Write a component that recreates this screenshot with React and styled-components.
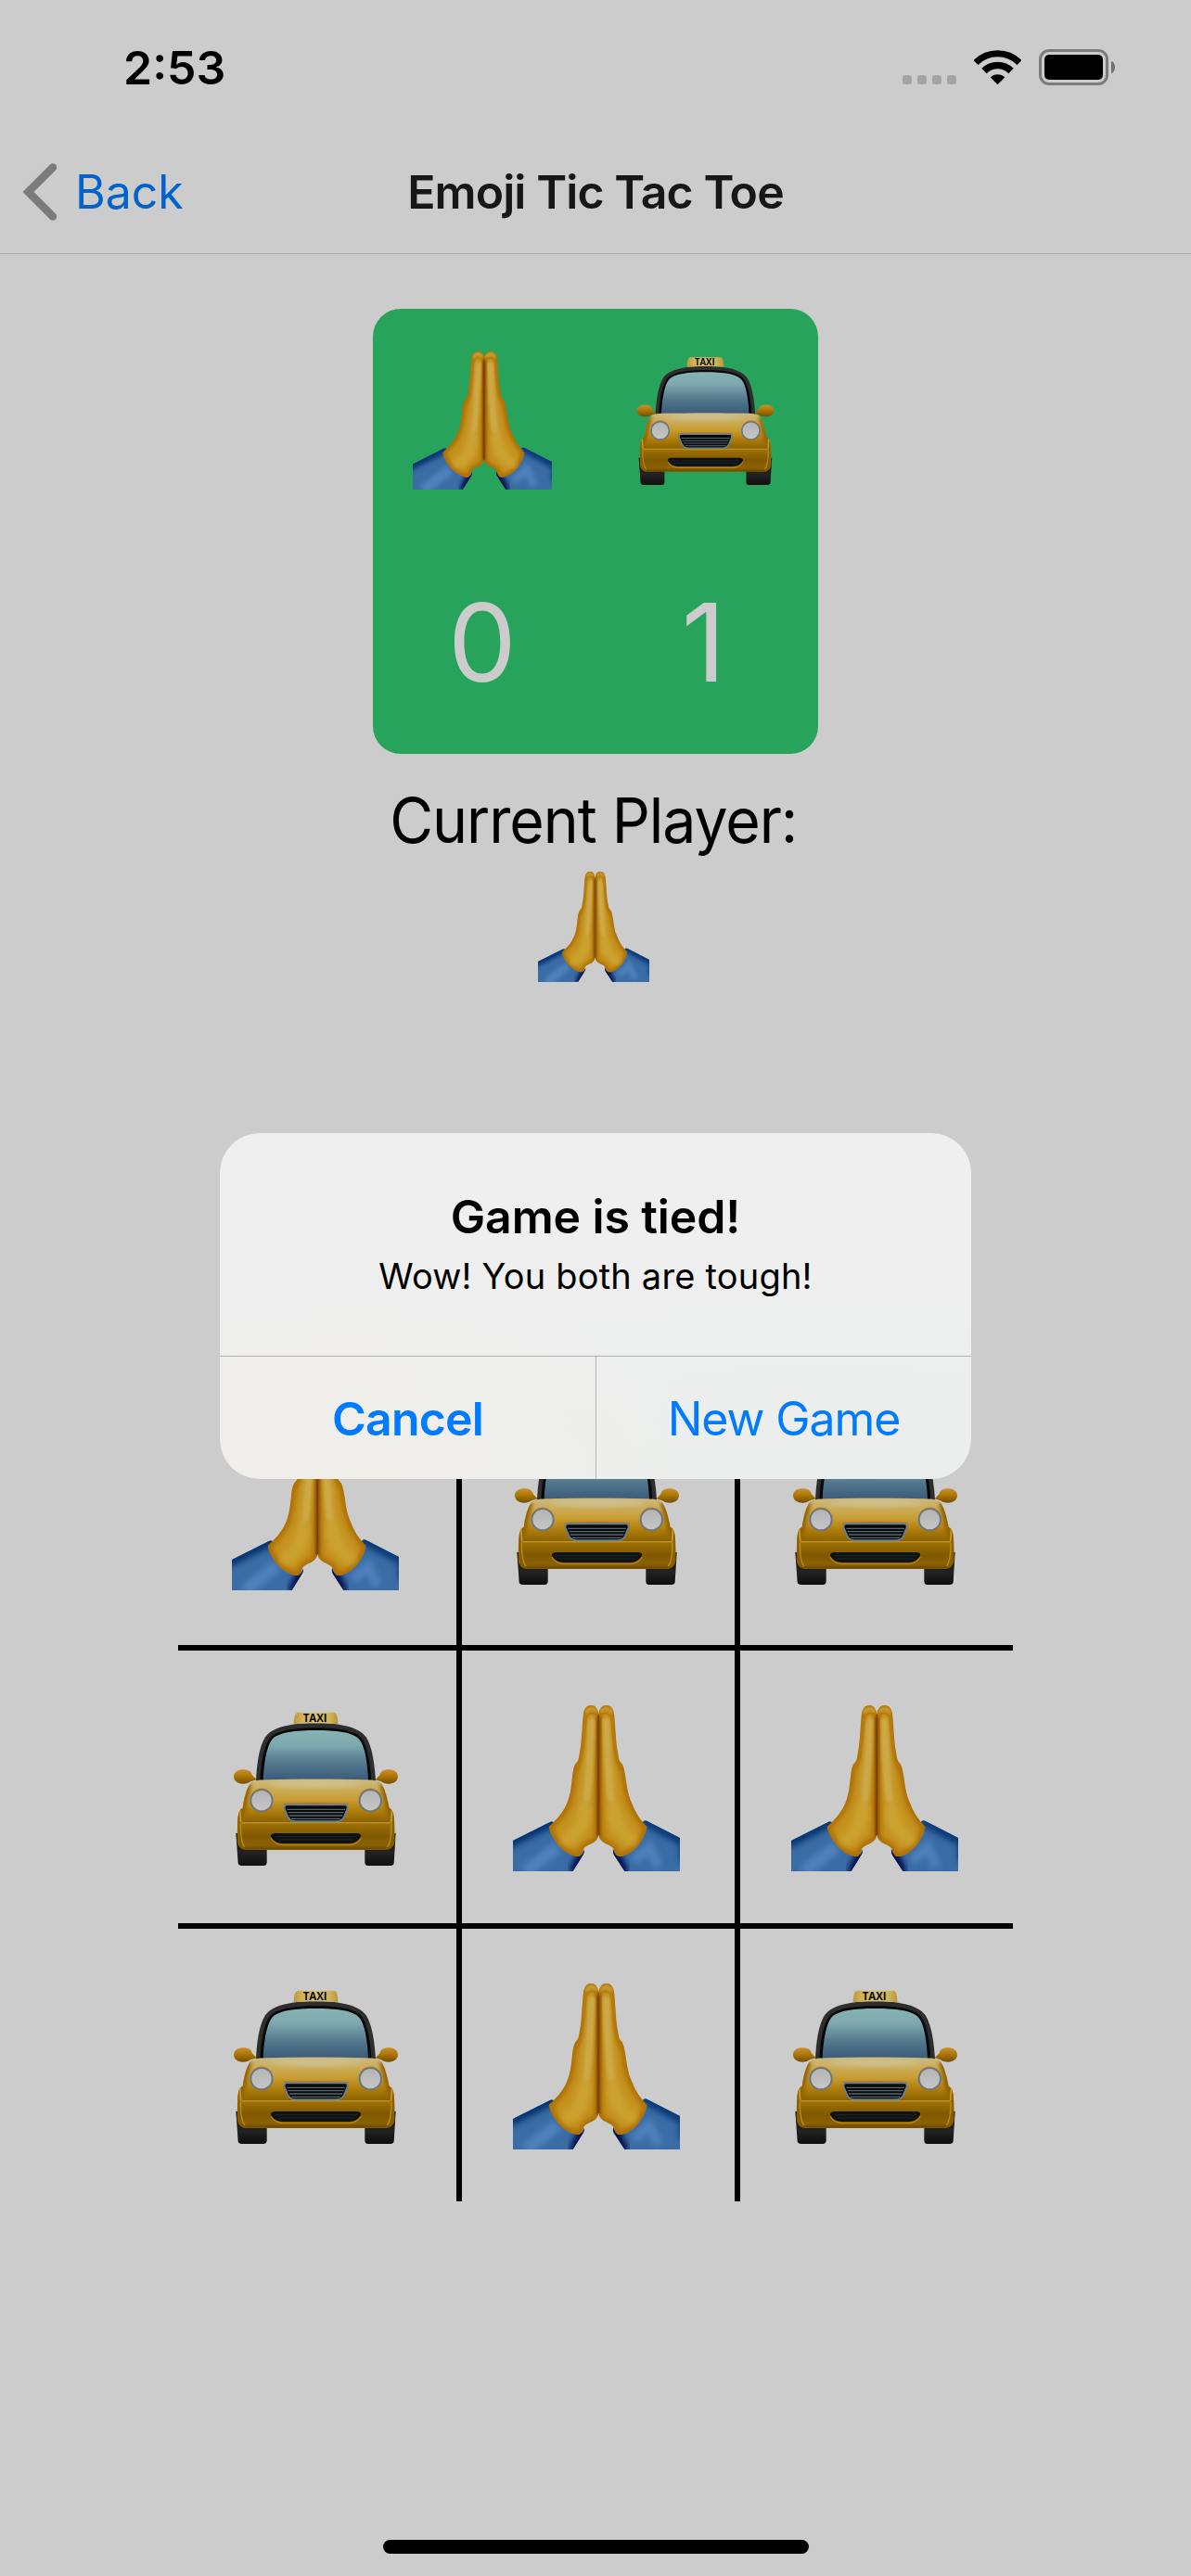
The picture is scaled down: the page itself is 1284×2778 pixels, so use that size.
import React from 'react';
import styled, { createGlobalStyle } from 'styled-components';

const GlobalStyle = createGlobalStyle`
  * { box-sizing: border-box; }
  body {
    margin: 0;
    background: #cccccc;
    font-family: Inter, Roboto, 'Liberation Sans', sans-serif;
  }
`;

const Screen = styled.div`
  display: flex;
  flex-direction: column;
  width: 1284px;
  height: 2778px;
  background: #cccccc;
`;

/* ---------- status bar ---------- */

const StatusBar = styled.header`
  display: flex;
  align-items: center;
  justify-content: space-between;
  height: 145px;
  padding: 0 82px 0 133px;
`;

const Clock = styled.span`
  font-size: 50px;
  font-weight: 600;
  line-height: 60px;
  color: #000;
`;

const StatusIcons = styled.div`
  display: flex;
  align-items: center;
  gap: 19px;
`;

const Signal = styled.div`
  display: flex;
  align-items: flex-end;
  gap: 6px;
  height: 37px;
`;

const SignalDot = styled.i`
  width: 10px;
  height: 10px;
  border-radius: 3px;
  background: #a3a3a3;
`;

const BatteryBox = styled.div`
  display: flex;
  align-items: center;
  gap: 3px;
`;

const BatteryShell = styled.div`
  width: 75px;
  height: 39px;
  padding: 3px;
  border: 3px solid #7b7b7b;
  border-radius: 11px;
`;

const BatteryLevel = styled.div`
  height: 100%;
  border-radius: 5px;
  background: #000;
`;

const BatteryTip = styled.i`
  width: 4px;
  height: 13px;
  border-radius: 0 4px 4px 0 / 0 6.5px 6.5px 0;
  background: #707070;
`;

/* ---------- navigation bar ---------- */

const NavBar = styled.nav`
  display: grid;
  grid-template-columns: 1fr auto 1fr;
  align-items: center;
  height: 129px;
  padding: 0 25px 4px;
  border-bottom: 1px solid #b0b0b0;
`;

const BackButton = styled.button`
  display: flex;
  align-items: center;
  gap: 20px;
  padding: 0;
  border: 0;
  background: none;
  font: inherit;
  font-size: 50px;
  line-height: 60px;
  color: #0062cc;
`;

const NavTitle = styled.h1`
  margin: 0;
  padding-bottom: 1px;
  font-size: 50px;
  font-weight: 600;
  line-height: 60px;
  letter-spacing: -0.92px;
  color: #171718;
`;

/* ---------- game ---------- */

const Main = styled.main`
  display: flex;
  flex-direction: column;
  align-items: center;
  padding-top: 59px;
`;

const ScoreCard = styled.section`
  display: grid;
  grid-template-columns: 240px 240px;
  grid-template-rows: 150px 140px;
  row-gap: 95px;
  justify-items: center;
  width: 480px;
  height: 480px;
  padding-top: 45px;
  border-radius: 30px;
  background: #27a35b;
`;

const ScoreCell = styled.div`
  padding-right: ${(p) => p.$shift || 4}px;
  font-size: 117px;
  line-height: 140px;
  color: #cccccc;
`;

const Turn = styled.section`
  display: flex;
  flex-direction: column;
  align-items: center;
  gap: 14px;
  margin-top: 32px;
  padding-right: 4px;
`;

const TurnLabel = styled.p`
  margin: 0;
  font-size: 67px;
  line-height: 80px;
  letter-spacing: -1.1px;
  transform: scaleX(0.96);
  color: #000;
`;

const Board = styled.section`
  display: grid;
  grid-template-columns: repeat(3, 300px);
  grid-template-rows: repeat(3, 300px);
  margin-top: 415px;
`;

const Square = styled.div`
  display: flex;
  align-items: center;
  justify-content: center;
  padding: 2px 4px 0 0;
  border: 0 solid #000;
  border-left-width: ${(p) => (p.$col > 0 ? 6 : 0)}px;
  border-top-width: ${(p) => (p.$row > 0 ? 6 : 0)}px;
`;

const EmojiSvg = styled.svg`
  display: block;
  width: ${(p) => p.$size}px;
  height: ${(p) => p.$size}px;
`;

const HomeIndicator = styled.div`
  width: 459px;
  height: 15px;
  margin: auto auto 24px;
  border-radius: 8px;
  background: #000;
`;

/* ---------- alert ---------- */

const Overlay = styled.div`
  position: absolute;
  top: 0;
  left: 0;
  display: flex;
  justify-content: center;
  align-items: center;
  width: 1284px;
  height: 2778px;
  padding-top: 39px;
`;

const Alert = styled.div`
  width: 810px;
  height: 373px;
  border-radius: 43px;
  overflow: hidden;
  background:
    radial-gradient(ellipse 420px 200px at 18% 100%, #f0eee9 0%, rgba(240, 238, 233, 0) 100%),
    radial-gradient(ellipse 620px 230px at 80% 100%, #eaeeed 0%, rgba(234, 238, 237, 0) 100%),
    #efefef;
`;

const AlertBody = styled.div`
  height: 240px;
  padding-top: 60px;
  text-align: center;
`;

const AlertTitle = styled.h2`
  margin: 0;
  font-size: 50px;
  font-weight: 600;
  line-height: 60px;
  letter-spacing: -0.12px;
  color: #000;
`;

const AlertMessage = styled.p`
  margin: 9px 0 0;
  font-size: 38px;
  line-height: 50px;
  letter-spacing: 0.2px;
  color: #000;
`;

const AlertActions = styled.div`
  display: grid;
  grid-template-columns: 405px 405px;
  height: 133px;
  border-top: 1px solid #b0b0b0;
`;

const AlertButton = styled.button`
  padding: 1px 0 0;
  border: 0;
  border-left: ${(p) => (p.$divided ? '1px solid #b3b3b3' : '0')};
  background: none;
  font: inherit;
  font-size: 50px;
  font-weight: ${(p) => (p.$strong ? 600 : 400)};
  letter-spacing: ${(p) => (p.$strong ? '-0.8px' : '-1.1px')};
  color: #007aff;
`;

/* ---------- drawings ---------- */

const HAND_L =
  'M316 84 C313 67 304 57 292 57 C279 57 269 67 267 84 C262 125 262 180 254 214 C252 230 250 239 244 243 C237 251 234 262 231 288 C227 322 225 345 216 368 C206 395 188 420 155 450 C163 492 203 541 248 547 C259 547 265 535 268 521 C275 509 296 507 307 495 C314 487 316 481 316 470 Z';
const HAND_R =
  'M316 84 C319 67 328 57 341 57 C354 57 364 67 366 84 C371 125 371 180 379 214 C381 230 383 239 389 243 C396 251 399 262 403 288 C408 322 411 345 421 368 C432 395 443 420 473 450 C466 492 430 541 386 547 C374 547 367 535 364 521 C357 509 336 507 325 495 C318 487 316 481 316 470 Z';

function PrayEmoji({ size }) {
  return (
    <EmojiSvg $size={size} viewBox="39 54 540 540" role="img" aria-label="folded hands">
      <defs>
        <filter id="prayBlur" x="-50%" y="-50%" width="200%" height="200%" colorInterpolationFilters="sRGB">
          <feGaussianBlur stdDeviation="9" />
        </filter>
        <filter id="praySoft" filterUnits="userSpaceOnUse" x="39" y="30" width="540" height="580" colorInterpolationFilters="sRGB">
          <feGaussianBlur stdDeviation="4" />
        </filter>
        <clipPath id="prayL"><path d={HAND_L} /></clipPath>
        <clipPath id="prayR"><path d={HAND_R} /></clipPath>
        <clipPath id="sleeveL">
          <path d="M39 495 L160 434 Q168 431 172 438 L262 540 L270 524 Q270 534 266 541 L233 594 H39 Z" />
        </clipPath>
        <clipPath id="sleeveR">
          <path d="M579 486 L472 431 Q464 427 458 436 L372 540 L363 522 Q361 534 367 543 L400 594 H579 Z" />
        </clipPath>
      </defs>

      <g clipPath="url(#sleeveL)">
        <rect x="39" y="420" width="240" height="174" fill="#3a6ca6" />
        <path d="M20 500 L170 425 L175 450" stroke="#063470" strokeWidth="46" fill="none" filter="url(#prayBlur)" />
        <path d="M278 515 L238 602" stroke="#000e4a" strokeWidth="40" fill="none" filter="url(#prayBlur)" />
        <path d="M80 595 L185 515" stroke="#4f82bc" strokeWidth="40" fill="none" filter="url(#prayBlur)" />
      </g>
      <g clipPath="url(#sleeveR)">
        <rect x="360" y="420" width="219" height="174" fill="#3a6ca6" />
        <path d="M460 420 L600 495 V560" stroke="#0b3a76" strokeWidth="46" fill="none" filter="url(#prayBlur)" />
        <path d="M356 515 L396 602" stroke="#000e4a" strokeWidth="40" fill="none" filter="url(#prayBlur)" />
        <path d="M430 560 L480 515 L510 580" stroke="#4f82bc" strokeWidth="30" fill="none" filter="url(#prayBlur)" />
      </g>

      <g clipPath="url(#prayL)">
        <path d={HAND_L} fill="#c6931f" />
        <path d={HAND_L} fill="none" stroke="#a86900" strokeWidth="24" filter="url(#prayBlur)" />
        <path d="M292 105 C286 200 284 300 272 380 C268 410 264 430 262 452" fill="none" stroke="#cba541" strokeWidth="24" strokeLinecap="round" filter="url(#prayBlur)" />
        <path d="M270 400 C262 450 240 480 215 490" fill="none" stroke="#cba12f" strokeWidth="44" strokeLinecap="round" filter="url(#prayBlur)" />
        <path d="M294 110 C290 200 286 290 278 360" fill="none" stroke="#cda947" strokeWidth="18" strokeLinecap="round" filter="url(#praySoft)" />
        <path d="M274 82 Q292 54 310 80" fill="none" stroke="#c99e35" strokeWidth="12" filter="url(#praySoft)" />
        <path d="M312 92 C306 80 284 78 277 96 C271 140 270 190 262 225 C259 245 252 258 249 268" fill="none" stroke="#b57a08" strokeWidth="4" />
        <path d="M316 95 V480" fill="none" stroke="#6f3300" strokeWidth="9" filter="url(#praySoft)" />
      </g>
      <g clipPath="url(#prayR)">
        <path d={HAND_R} fill="#c6931f" />
        <path d={HAND_R} fill="none" stroke="#a86900" strokeWidth="24" filter="url(#prayBlur)" />
        <path d="M341 105 C345 200 348 300 362 380 C366 410 368 430 368 450" fill="none" stroke="#cba541" strokeWidth="24" strokeLinecap="round" filter="url(#prayBlur)" />
        <path d="M364 400 C378 450 396 480 420 490" fill="none" stroke="#cba12f" strokeWidth="44" strokeLinecap="round" filter="url(#prayBlur)" />
        <path d="M340 110 C343 200 346 290 356 360" fill="none" stroke="#cda947" strokeWidth="20" strokeLinecap="round" filter="url(#praySoft)" />
        <path d="M323 80 Q341 54 359 82" fill="none" stroke="#c99e35" strokeWidth="12" filter="url(#praySoft)" />
        <path d="M321 92 C327 80 349 78 356 96 C362 140 363 190 371 225 C374 245 382 258 386 268" fill="none" stroke="#b57a08" strokeWidth="4" />
        <path d="M317 95 V480" fill="none" stroke="#7a3d00" strokeWidth="7" filter="url(#praySoft)" />
      </g>
      <path d="M316 86 V478" fill="none" stroke="#6f3600" strokeWidth="3" />
    </EmojiSvg>
  );
}

const CAR_BODY =
  'M86 284 C94 271 112 269 140 268 C240 265 362 265 464 268 C490 269 508 271 516 284 C528 306 534 334 539 360 C553 364 555 386 556 415 L557 462 C557 482 546 494 528 495 H76 C58 494 47 482 47 462 L48 415 C49 386 51 364 65 360 C68 334 74 306 86 284 Z';
const WINDSHIELD =
  'M131 270 C133 215 143 160 158 140 C178 113 240 108 302 108 C364 108 424 113 444 140 C460 160 469 215 471 270 C360 265 240 265 131 270 Z';

function TaxiEmoji({ size }) {
  return (
    <EmojiSvg $size={size} viewBox="30 24 540 540" role="img" aria-label="oncoming taxi">
      <defs>
        <filter id="taxiBlur" filterUnits="userSpaceOnUse" x="30" y="200" width="540" height="320" colorInterpolationFilters="sRGB">
          <feGaussianBlur stdDeviation="7" />
        </filter>
        <linearGradient id="taxiSign" x1="0" x2="1" y1="0" y2="0">
          <stop offset="0" stopColor="#c0953c" />
          <stop offset="0.2" stopColor="#d0b45c" />
          <stop offset="0.5" stopColor="#d6c17a" />
          <stop offset="0.8" stopColor="#d0b45c" />
          <stop offset="1" stopColor="#bd9440" />
        </linearGradient>
        <linearGradient id="taxiGlass" x1="0" x2="0" y1="0" y2="1">
          <stop offset="0" stopColor="#87b2b3" />
          <stop offset="0.3" stopColor="#7da8ae" />
          <stop offset="0.65" stopColor="#54788d" />
          <stop offset="1" stopColor="#3a5a7b" />
        </linearGradient>
        <linearGradient id="taxiBody" x1="0" x2="0" y1="0" y2="1">
          <stop offset="0" stopColor="#cbb980" />
          <stop offset="0.14" stopColor="#cbae5c" />
          <stop offset="0.3" stopColor="#c79b2f" />
          <stop offset="0.45" stopColor="#ae7c0b" />
          <stop offset="0.6" stopColor="#8e6400" />
          <stop offset="1" stopColor="#805a00" />
        </linearGradient>
        <linearGradient id="taxiBumper" x1="0" x2="0" y1="0" y2="1">
          <stop offset="0" stopColor="#c49a2c" />
          <stop offset="0.08" stopColor="#9c6e06" />
          <stop offset="0.5" stopColor="#805900" />
          <stop offset="0.85" stopColor="#8a6102" />
          <stop offset="1" stopColor="#6b4800" />
        </linearGradient>
        <linearGradient id="taxiMirror" x1="0" x2="0" y1="0" y2="1">
          <stop offset="0" stopColor="#c58f38" />
          <stop offset="0.4" stopColor="#b37a06" />
          <stop offset="1" stopColor="#764f00" />
        </linearGradient>
        <linearGradient id="taxiTire" x1="0" x2="0" y1="0" y2="1">
          <stop offset="0" stopColor="#0d0d0d" />
          <stop offset="0.6" stopColor="#232323" />
          <stop offset="1" stopColor="#0e0e0e" />
        </linearGradient>
        <linearGradient id="taxiLamp" x1="0" x2="0" y1="0" y2="1">
          <stop offset="0" stopColor="#b4b4b4" />
          <stop offset="1" stopColor="#c6c6c6" />
        </linearGradient>
        <clipPath id="taxiBodyClip"><path d={CAR_BODY} /></clipPath>
      </defs>

      <path d="M43 440 L50 538 Q52 546 62 546 H132 Q143 546 143 535 V470 Z" fill="url(#taxiTire)" />
      <path d="M560 440 L554 538 Q552 546 543 546 H470 Q460 546 460 535 V470 Z" fill="url(#taxiTire)" />

      <path d="M108 272 C110 225 117 162 138 130 C166 91 240 85 301 85 C362 85 434 91 464 130 C485 162 492 225 495 272 Z" fill="#2d2e2d" />
      <path d="M121 272 C123 215 134 160 150 137 C172 106 240 100 302 100 C364 100 430 106 452 137 C468 160 478 215 481 272 Z" fill="#060708" />
      <path d={WINDSHIELD} fill="url(#taxiGlass)" />

      <path d="M230 88 C230 72 233 60 237 54 Q240 50 246 50 H358 Q364 50 367 54 C371 60 373 72 373 88 C330 84 270 84 230 88 Z" fill="url(#taxiSign)" />
      <text x="260" y="82" fontFamily="'Open Sans', 'Liberation Sans', sans-serif" fontWeight="700" fontSize="37" textLength="78" lengthAdjust="spacingAndGlyphs" fill="#0b0b08">TAXI</text>

      <path d="M36 258 C36 243 50 235 66 235 C84 235 94 242 95 252 L110 268 L90 274 C84 279 76 281 66 281 C48 280 37 272 36 258 Z" fill="url(#taxiMirror)" />
      <path d="M567 258 C567 243 553 235 537 235 C519 235 510 242 509 252 L494 268 L513 274 C519 279 527 281 537 281 C555 280 566 272 567 258 Z" fill="url(#taxiMirror)" />

      <path d={CAR_BODY} fill="url(#taxiBody)" />
      <g clipPath="url(#taxiBodyClip)">
        <path d="M84 280 C68 330 62 380 48 400" fill="none" stroke="#8f5f00" strokeWidth="22" filter="url(#taxiBlur)" />
        <path d="M518 280 C532 330 540 380 556 400" fill="none" stroke="#8f5f00" strokeWidth="22" filter="url(#taxiBlur)" />
        <ellipse cx="302" cy="282" rx="150" ry="12" fill="#d0c499" opacity="0.7" filter="url(#taxiBlur)" />
        <path d="M56 365 C58 385 58 395 59 405" fill="none" stroke="#c99a2c" strokeWidth="5" />
        <path d="M548 365 C546 385 546 395 545 405" fill="none" stroke="#c99a2c" strokeWidth="5" />
        <path d="M64 405 H541 Q549 405 549 414 V462 Q546 489 524 493 H80 Q58 489 55 462 V414 Q55 405 64 405 Z" fill="url(#taxiBumper)" />
        <path d="M58 410 Q58 470 72 486" fill="none" stroke="#bd8b16" strokeWidth="4" />
        <path d="M546 410 Q546 470 532 486" fill="none" stroke="#bd8b16" strokeWidth="4" />
      </g>

      <circle cx="126" cy="335" r="35" fill="url(#taxiLamp)" stroke="#68767f" strokeWidth="6" />
      <circle cx="478" cy="335" r="35" fill="url(#taxiLamp)" stroke="#68767f" strokeWidth="6" />
      <path d="M95 313 A38 38 0 0 1 157 313" fill="none" stroke="#b9772f" strokeWidth="3" />
      <path d="M447 313 A38 38 0 0 1 509 313" fill="none" stroke="#b9772f" strokeWidth="3" />

      <path d="M196 346 Q302 341 408 346" fill="none" stroke="#b8692f" strokeWidth="3" />
      <path d="M208 349 H396 Q407 350 403 363 L393 388 Q386 402 370 403 H234 Q218 402 211 388 L200 363 Q197 350 208 349 Z" fill="#08090a" stroke="#6a818b" strokeWidth="6" />
      <path d="M208 364 H396 M212 374 H392 M216 384 H388 M222 394 H382" stroke="#56656c" strokeWidth="4" />

      <path d="M170 441 H434 Q452 442 446 454 Q436 473 410 474 H194 Q168 473 157 455 Q152 442 170 441 Z" fill="#0e1111" />
      <path d="M156 456 Q168 478 196 479 H408 Q436 478 448 456" fill="none" stroke="#b8860f" strokeWidth="4" />
      <path d="M170 452 H436 M178 462 H426" stroke="#1f2627" strokeWidth="3" />
    </EmojiSvg>
  );
}

function Emoji({ kind, size }) {
  return kind === 'pray' ? <PrayEmoji size={size} /> : <TaxiEmoji size={size} />;
}

function WifiIcon() {
  return (
    <svg width="51" height="38" viewBox="60 71 153 114" aria-label="wifi">
      <g fill="none" stroke="#000">
        <path d="M66.1 111.6 A99.5 99.5 0 0 1 206.9 111.6" strokeWidth="21" />
        <path d="M93 138.5 A61.5 61.5 0 0 1 180 138.5" strokeWidth="23" />
      </g>
      <path d="M136.5 183 L113 159.500 A33.500 33.500 0 0 1 160 159.500 Z" />
    </svg>
  );
}

function ChevronLeft() {
  return (
    <svg width="36" height="62" viewBox="0 0 36 62" aria-hidden="true">
      <path d="M32 4.500 L5.500 31 L32 57.500" fill="none" stroke="#7b7b7b" strokeWidth="8.500" strokeLinecap="round" />
    </svg>
  );
}

/* ---------- page ---------- */

const board = [
  ['pray', 'taxi', 'taxi'],
  ['taxi', 'pray', 'pray'],
  ['taxi', 'pray', 'taxi'],
];

export default function App() {
  return (
    <>
      <GlobalStyle />
      <Screen>
        <StatusBar>
          <Clock>2:53</Clock>
          <StatusIcons>
            <Signal>
              <SignalDot />
              <SignalDot />
              <SignalDot />
              <SignalDot />
            </Signal>
            <WifiIcon />
            <BatteryBox>
              <BatteryShell>
                <BatteryLevel />
              </BatteryShell>
              <BatteryTip />
            </BatteryBox>
          </StatusIcons>
        </StatusBar>

        <NavBar>
          <BackButton>
            <ChevronLeft />
            Back
          </BackButton>
          <NavTitle>Emoji Tic Tac Toe</NavTitle>
        </NavBar>

        <Main>
          <ScoreCard>
            <ScoreCell><Emoji kind="pray" size={150} /></ScoreCell>
            <ScoreCell><Emoji kind="taxi" size={150} /></ScoreCell>
            <ScoreCell>0</ScoreCell>
            <ScoreCell $shift={7}>1</ScoreCell>
          </ScoreCard>

          <Turn>
            <TurnLabel>Current Player:</TurnLabel>
            <Emoji kind="pray" size={120} />
          </Turn>

          <Board>
            {board.map((row, r) =>
              row.map((kind, c) => (
                <Square key={`${r}-${c}`} $row={r} $col={c}>
                  <Emoji kind={kind} size={180} />
                </Square>
              ))
            )}
          </Board>
        </Main>

        <HomeIndicator />
      </Screen>

      <Overlay>
        <Alert role="alertdialog">
          <AlertBody>
            <AlertTitle>Game is tied!</AlertTitle>
            <AlertMessage>Wow! You both are tough!</AlertMessage>
          </AlertBody>
          <AlertActions>
            <AlertButton $strong>Cancel</AlertButton>
            <AlertButton $divided>New Game</AlertButton>
          </AlertActions>
        </Alert>
      </Overlay>
    </>
  );
}
